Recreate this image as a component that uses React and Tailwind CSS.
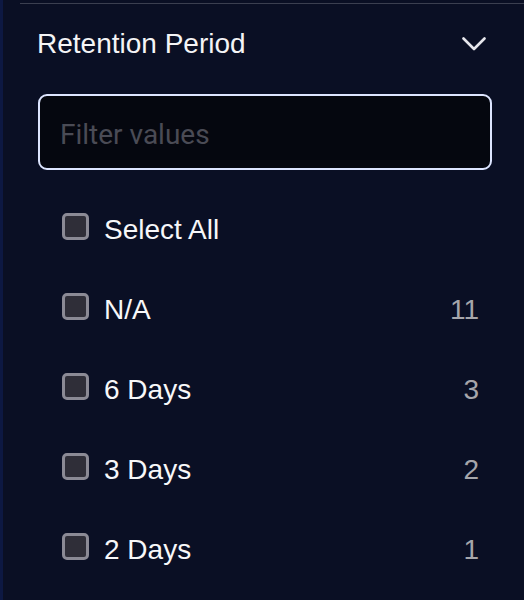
import React from 'react';

const rows = [
    { label: 'Select All', count: null },
    { label: 'N/A', count: 11 },
    { label: '6 Days', count: 3 },
    { label: '3 Days', count: 2 },
    { label: '2 Days', count: 1 },
];

const Chevron = () => (
    <svg width="24" height="14" viewBox="0 0 24 14" fill="none">
        <path d="M1.5 1.5 L12 12 L22.5 1.5" stroke="#e6e6ec" strokeWidth="2.6" strokeLinecap="round" strokeLinejoin="round" />
    </svg>
);

const App = () => {
    return (
        <div className="w-[524px] h-[600px] overflow-hidden bg-[#0a0f24] flex">
            <div className="w-[3px] h-full bg-[#0d1842]" />
            <div className="flex-1 flex flex-col pt-[3px]">
                <div className="ml-[17px] h-px bg-[#3b3f50]" />

                <div className="h-[80px] flex items-center justify-between pl-[34px] pr-[38px]">
                    <h2 className="text-[28px] leading-none text-[#f4f4f6] font-['Liberation_Sans',Arial,sans-serif]">Retention Period</h2>
                    <Chevron />
                </div>

                <div className="mt-[10px] ml-[35px] w-[454px] h-[76px] rounded-[9px] border-2 border-[#dde5ff] bg-[#05070f] flex items-center pl-[20px] pt-[5px]">
                    <input
                        type="text"
                        placeholder="Filter values"
                        className="w-full bg-transparent outline-none text-[28px] text-white placeholder:text-[#4a4b55] font-['Roboto',sans-serif]"
                    />
                </div>

                <ul className="mt-[18px] font-['Liberation_Sans',Arial,sans-serif]">
                    {rows.map(row => (
                        <li key={row.label} className="h-[80px] flex items-center pl-[59px] pr-[45px]">
                            <span className="w-[27px] h-[27px] mb-[3px] rounded-[5px] border-[3px] border-[#8b8a95] bg-[#2f2e38] shrink-0" />
                            <span className="ml-[15px] pt-[3px] text-[28px] text-[#f7f7f9] flex-1">{row.label}</span>
                            {row.count !== null && (
                                <span className="pt-[3px] text-[28px] text-[#a6a6ab]">{row.count}</span>
                            )}
                        </li>
                    ))}
                </ul>
            </div>
        </div>
    );
};

export default App;
